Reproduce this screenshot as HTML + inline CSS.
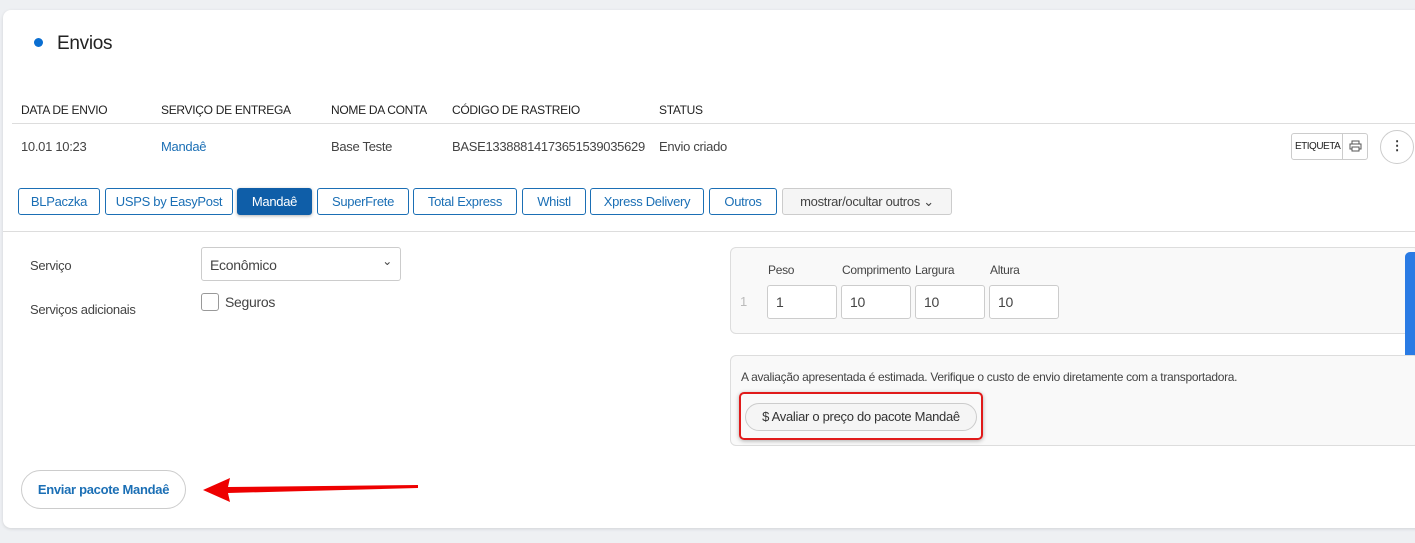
<!DOCTYPE html>
<html><head><meta charset="utf-8"><style>
*{box-sizing:border-box;margin:0;padding:0}
body{width:1415px;height:543px;background:#eef0f3;font-family:"Liberation Sans",sans-serif;color:#333;position:relative;overflow:hidden;font-size:13px;letter-spacing:-0.3px}
.a{position:absolute;white-space:nowrap}
.card{position:absolute;left:3px;top:10px;width:1430px;height:518px;background:#fff;border-radius:8px;box-shadow:0 1px 3px rgba(0,0,0,.12)}
.th{font-size:12px;color:#222;top:103px}
.td{top:139px;color:#444}
.tab{position:absolute;top:188px;height:27px;border:1px solid #1b6fb5;border-radius:3px;color:#1b6fb5;font-size:13px;line-height:25px;text-align:center}
.inp{position:absolute;top:285px;width:70px;height:34px;border:1px solid #ccc;border-radius:3px;background:#fff;padding:8px 8px;font-size:14px;color:#444}
.lb{top:263px;font-size:12px;color:#444}
</style></head><body>
<div class="a" style="left:0;top:0;width:1415px;height:10px;background:#eef0f3"></div>
<div class="card"></div>
<div class="a" style="left:34px;top:38px;width:9px;height:9px;border-radius:50%;background:#0a6ed1"></div>
<div class="a" style="left:57px;top:33px;font-size:19px;color:#222">Envios</div>
<div class="a th" style="left:21px">DATA DE ENVIO</div>
<div class="a th" style="left:161px">SERVIÇO DE ENTREGA</div>
<div class="a th" style="left:331px">NOME DA CONTA</div>
<div class="a th" style="left:452px">CÓDIGO DE RASTREIO</div>
<div class="a th" style="left:659px">STATUS</div>
<div class="a" style="left:12px;top:123px;width:1403px;height:1px;background:#ddd"></div>
<div class="a td" style="left:21px">10.01 10:23</div>
<div class="a td" style="left:161px;color:#1b6fb5">Mandaê</div>
<div class="a td" style="left:331px">Base Teste</div>
<div class="a td" style="left:452px">BASE133888141736515390356​29</div>
<div class="a td" style="left:659px">Envio criado</div>
<div class="a" style="left:1291px;top:133px;width:77px;height:27px;border:1px solid #ccc;border-radius:3px;background:#fff"></div>
<div class="a" style="left:1295px;top:141px;font-size:10px;color:#222;letter-spacing:-0.5px">ETIQUETA</div>
<div class="a" style="left:1342px;top:133px;width:1px;height:27px;background:#ccc"></div>
<svg class="a" style="left:1349px;top:140px" width="13" height="12" viewBox="0 0 13 12"><rect x="3" y="1" width="7" height="3" fill="none" stroke="#555"/><rect x="1" y="4" width="11" height="5" fill="none" stroke="#555"/><rect x="3" y="7" width="7" height="4" fill="#fff" stroke="#555"/></svg>
<div class="a" style="left:1380px;top:130px;width:34px;height:34px;border:1px solid #ccc;border-radius:50%;background:#fff;text-align:center;line-height:30px;font-weight:bold;font-size:13px">⋮</div>
<div class="tab" style="left:18px;width:82px">BLPaczka</div>
<div class="tab" style="left:105px;width:128px">USPS by EasyPost</div>
<div class="tab" style="left:237px;width:75px;background:#0f5ea8;color:#fff;border-color:#0f5ea8;box-shadow:0 1px 3px rgba(0,0,0,.3)">Mandaê</div>
<div class="tab" style="left:317px;width:92px">SuperFrete</div>
<div class="tab" style="left:413px;width:104px">Total Express</div>
<div class="tab" style="left:522px;width:64px">Whistl</div>
<div class="tab" style="left:590px;width:114px">Xpress Delivery</div>
<div class="tab" style="left:709px;width:68px">Outros</div>
<div class="tab" style="left:782px;width:170px;border-color:#ccc;background:#f5f5f5;color:#444">mostrar/ocultar outros ⌄</div>
<div class="a" style="left:3px;top:231px;width:1412px;height:1px;background:#ddd"></div>
<div class="a" style="left:30px;top:258px;color:#444">Serviço</div>
<div class="a" style="left:30px;top:302px;color:#444">Serviços adicionais</div>
<div class="a" style="left:201px;top:247px;width:200px;height:34px;border:1px solid #ccc;border-radius:3px;padding:9px 8px;color:#444;font-size:14px">Econômico<span style="position:absolute;right:8px;top:6px;font-size:12px">⌄</span></div>
<div class="a" style="left:201px;top:293px;width:18px;height:18px;border:1px solid #999;border-radius:3px"></div>
<div class="a" style="left:225px;top:294px;color:#444;font-size:14px">Seguros</div>
<div class="a" style="left:730px;top:247px;width:690px;height:87px;border:1px solid #ddd;border-radius:6px;background:#f9f9f9"></div>
<div class="a lb" style="left:768px">Peso</div>
<div class="a lb" style="left:842px">Comprimento</div>
<div class="a lb" style="left:915px">Largura</div>
<div class="a lb" style="left:990px">Altura</div>
<div class="a" style="left:740px;top:294px;color:#bbb">1</div>
<div class="inp" style="left:767px">1</div>
<div class="inp" style="left:841px">10</div>
<div class="inp" style="left:915px">10</div>
<div class="inp" style="left:989px">10</div>
<div class="a" style="left:1405px;top:252px;width:12px;height:116px;background:#2a7be4;border-radius:5px 0 0 5px"></div>
<div class="a" style="left:730px;top:355px;width:690px;height:91px;border:1px solid #ddd;border-radius:6px;background:#f9f9f9"></div>
<div class="a" style="left:741px;top:370px;color:#444;font-size:12px">A avaliação apresentada é estimada. Verifique o custo de envio diretamente com a transportadora.</div>
<div class="a" style="left:739px;top:392px;width:244px;height:48px;border:2px solid #e01a1a;border-radius:5px;box-shadow:0 1px 4px rgba(0,0,0,.3)"></div>
<div class="a" style="left:745px;top:403px;width:232px;height:28px;border:1px solid #ccc;border-radius:14px;background:#f5f5f5;text-align:center;line-height:26px;color:#333">$ Avaliar o preço do pacote Mandaê</div>
<div class="a" style="left:21px;top:470px;width:165px;height:39px;border:1px solid #ccc;border-radius:20px;text-align:center;line-height:37px;color:#1b6fb5;font-weight:bold">Enviar pacote Mandaê</div>
<svg class="a" style="left:200px;top:475px" width="222" height="30"><polygon points="3,15 30,3 28,12 218,10 218,13 28,18 30,27" fill="#ee0000"/></svg>
</body></html>
